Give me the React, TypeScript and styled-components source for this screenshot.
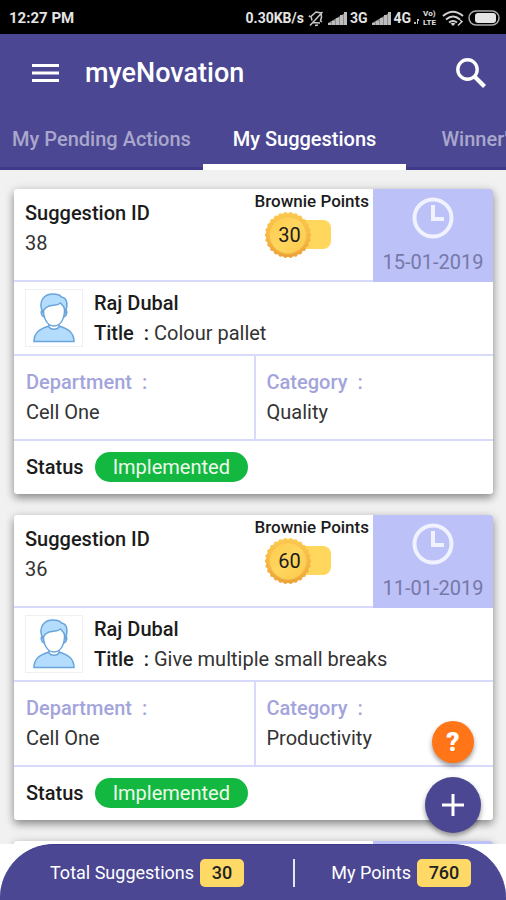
import React from "react";
import styled, { createGlobalStyle } from "styled-components";

const colors = {
  primary: "#4b4793",
  primaryDark: "#3f3a8a",
  line: "#d7dafa",
  lilac: "#a3a4dc",
  date: "#bcc1f7",
  yellow: "#ffd966",
};

const GlobalStyle = createGlobalStyle`
  * { box-sizing: border-box; }
  body { margin: 0; font-family: Roboto, "Liberation Sans", sans-serif; color: #1c1c1c; }
  button { font: inherit; border: 0; padding: 0; background: none; color: inherit; cursor: pointer; }
`;

const Screen = styled.div`
  position: relative;
  display: flex;
  flex-direction: column;
  height: 100vh;
  overflow: hidden;
  background: #fff;
`;

const StatusBar = styled.div`
  flex: none;
  display: flex;
  align-items: center;
  justify-content: space-between;
  height: 34px;
  padding: 2px 6px 0 9px;
  background: #000;
  color: #e4e4e4;
  font-size: 15px;
  font-weight: 700;
`;

const Indicators = styled.div`
  display: flex;
  align-items: center;
  gap: 4px;
  font-size: 14px;
`;

const Network = styled.span`
  display: flex;
  align-items: center;
  gap: 3px;
`;

const Volte = styled.span`
  display: flex;
  flex-direction: column;
  margin-right: 2px;
  font-size: 8px;
  line-height: 9px;
`;

const Header = styled.header`
  flex: none;
  background: ${colors.primary};
  color: #fff;
`;

const AppBar = styled.div`
  display: flex;
  align-items: center;
  height: 78px;
  padding: 0 19px 0 32px;
`;

const IconButton = styled.button`
  display: flex;
`;

const AppTitle = styled.h1`
  flex: 1;
  margin: 0 0 0 26px;
  font-size: 27px;
  font-weight: 500;
`;

const Tabs = styled.nav`
  display: flex;
  overflow: hidden;
`;

const Tab = styled.button<{ $active?: boolean }>`
  flex: 0 0 40.12%;
  height: 58px;
  padding-top: 2px;
  border-bottom: ${(p) => (p.$active ? "6px solid #fff" : `3px solid ${colors.primaryDark}`)};
  padding-bottom: ${(p) => (p.$active ? "0" : "3px")};
  color: ${(p) => (p.$active ? "#fff" : "#a9a7cb")};
  font-size: 20px;
  font-weight: 500;
  white-space: nowrap;
`;

const List = styled.main`
  flex: 1;
  min-height: 0;
  overflow: hidden;
  display: flex;
  flex-direction: column;
  gap: 21px;
  padding: 19px 13px 0 14px;
  background: #f1f1f1;
`;

const Card = styled.article`
  flex: none;
  border-radius: 3px;
  background: #fff;
  box-shadow: 0 4px 8px rgba(0, 0, 0, 0.4), 0 0 12px rgba(0, 0, 0, 0.08);
  font-size: 20px;
  line-height: 30px;
  overflow: hidden;
`;

const Summary = styled.div`
  display: flex;
  height: 93px;
  border-bottom: 2px solid ${colors.line};
`;

const IdBlock = styled.div`
  flex: 1;
  padding: 9px 0 0 11px;
`;

const Label = styled.div`
  font-weight: 500;
`;

const Value = styled.div`
  color: #333;
`;

const Points = styled.div`
  padding: 2px 4px 0 0;
`;

const PointsLabel = styled.div`
  font-size: 17px;
  line-height: 20px;
  font-weight: 500;
`;

const PointsBadge = styled.div`
  position: relative;
  display: flex;
  align-items: center;
  width: 68px;
  height: 48px;
  margin-left: 10px;
`;

const CoinArt = styled.svg`
  position: absolute;
  inset: 0;
`;

const PointsValue = styled.span`
  position: relative;
  width: 50px;
  text-align: center;
`;

const DateBlock = styled.div`
  flex: none;
  display: flex;
  flex-direction: column;
  align-items: center;
  gap: 8px;
  width: 120px;
  margin-bottom: -2px;
  padding-top: 8px;
  background: ${colors.date};
  color: #7678a8;
`;

const Person = styled.div`
  display: flex;
  height: 74px;
  padding: 6px 11px 0;
  border-bottom: 2px solid ${colors.line};
`;

const Avatar = styled.div`
  flex: none;
  display: flex;
  align-items: center;
  justify-content: center;
  width: 58px;
  height: 58px;
  margin: 1px 11px 0 0;
  border: 1px solid #f0f0f4;
`;

const Thin = styled.span`
  color: #333;
  font-weight: 400;
`;

const Details = styled.div`
  display: grid;
  grid-template-columns: 1fr 1fr;
  height: 85px;
  border-bottom: 2px solid ${colors.line};
`;

const Detail = styled.div`
  padding: 11px 12px 0;
  & + & {
    border-left: 2px solid ${colors.line};
    padding-left: 11px;
  }
`;

const DetailLabel = styled.div`
  color: ${colors.lilac};
  font-weight: 500;
  white-space: pre;
`;

const StatusRow = styled.div`
  display: flex;
  align-items: center;
  gap: 11px;
  height: 53px;
  padding: 0 0 2px 12px;
`;

const StatusPill = styled.span`
  padding: 0 18px;
  border-radius: 15px;
  background: #13b841;
  color: #eefbea;
`;

const Footer = styled.footer`
  flex: none;
  display: flex;
  align-items: center;
  justify-content: space-between;
  height: 56px;
  padding: 0 35px 0 50px;
  border-radius: 54px 54px 0 0;
  border-top: 1px solid ${colors.primaryDark};
  background: ${colors.primary};
  color: #fff;
  font-size: 18px;
`;

const Total = styled.div`
  display: flex;
  align-items: center;
  gap: 6px;
`;

const TotalValue = styled.span<{ $wide?: boolean }>`
  width: ${(p) => (p.$wide ? "54px" : "44px")};
  border-radius: 5px;
  background: ${colors.yellow};
  color: #222;
  font-weight: 500;
  line-height: 28px;
  text-align: center;
`;

const Divider = styled.span`
  width: 2px;
  height: 28px;
  margin-left: 13px;
  background: #e7e6f5;
`;

const Floating = styled.div`
  position: absolute;
  right: 25px;
  bottom: 67px;
  display: flex;
  flex-direction: column;
  align-items: center;
  gap: 14px;
`;

const RoundButton = styled.button<{ $large?: boolean }>`
  display: flex;
  align-items: center;
  justify-content: center;
  width: ${(p) => (p.$large ? 56 : 42)}px;
  height: ${(p) => (p.$large ? 56 : 42)}px;
  border-radius: 50%;
  background: ${(p) => (p.$large ? colors.primary : "#ff7517")};
  box-shadow: 0 3px 5px rgba(0, 0, 0, 0.4);
  color: #fff;
  font-size: 26px;
  font-weight: 900;
`;

const MuteIcon = () => (
  <svg width="16" height="17" viewBox="0 0 16 17" fill="none" stroke="#c8c8c8" strokeWidth="1.5">
    <path d="M4 10.500 3 6.500 8 2l5 1 .5 4-1 4 1.500 1M5 12.500l7 .5M7 15.500l3-.5M1 7l1-1.500M14.500 2 2 15.500" />
  </svg>
);

const SignalIcon = () => (
  <svg width="19" height="13" viewBox="0 0 19 13">
    <path d="M0 13v-2L19 0v13z" fill="#8c8c8c" />
    <path d="M0 11h3v2H0zM4 9h3v4H4zM8 6h3v7H8zM12 3h3v10h-3zM16 0h3v13h-3z" fill="#bdbdbd" />
  </svg>
);

const DataIcon = () => (
  <svg width="5" height="11" viewBox="0 0 5 11" fill="#bdbdbd">
    <path d="M0 9h2v2H0zM3 6h2v2H4v3H3z" />
  </svg>
);

const WifiIcon = () => (
  <svg width="22" height="17" viewBox="0 0 22 17" fill="none" stroke="#d0d0d0" strokeWidth="2">
    <path d="M1 6Q11-2.500 21 6M4 9.500q7-6 14 0M7 12.500q4-3 8 0" />
    <path d="m11 16-2.500-2.500q2.500-1.500 5 0z" fill="#d0d0d0" stroke="none" />
    <path d="m18 10 2 1.500-4 4" strokeWidth="1.500" />
  </svg>
);

const BatteryIcon = () => (
  <svg width="32" height="16" viewBox="0 0 32 16">
    <rect x="1" y="1" width="30" height="14" rx="7" fill="none" stroke="#aaa" strokeWidth="1.500" />
    <rect x="7" y="3" width="21" height="10" rx="3" fill="#e4e4e4" />
  </svg>
);

const MenuIcon = () => (
  <svg width="27" height="18" viewBox="0 0 27 18" fill="#fff">
    <path d="M0 0h27v3H0zM0 7.500h27v3H0zM0 15h27v3H0z" />
  </svg>
);

const SearchIcon = () => (
  <svg width="32" height="32" viewBox="0 0 32 32" fill="none" stroke="#fff">
    <circle cx="12.500" cy="12.500" r="9.700" strokeWidth="3.400" />
    <path d="m19.500 19.500 10 10" strokeWidth="4.200" />
  </svg>
);

const coinEdge = Array.from({ length: 192 }, (_, i) => {
  const angle = (i * Math.PI) / 96;
  const radius = 22.6 + 0.7 * Math.cos(angle * 26);
  return `${(24 + radius * Math.cos(angle)).toFixed(1)},${(24 + radius * Math.sin(angle)).toFixed(1)}`;
}).join(" ");

const Coin = () => (
  <CoinArt width="68" height="48" viewBox="0 0 68 48">
    <defs>
      <linearGradient id="coin-rim" x1="0" y1="0" x2="0" y2="1">
        <stop offset="0" stopColor="#fbcb50" />
        <stop offset="0.5" stopColor="#f6b944" />
        <stop offset="1" stopColor="#eca23a" />
      </linearGradient>
      <linearGradient id="coin-face" x1="0" y1="0" x2="1" y2="1">
        <stop offset="0" stopColor="#fdcb4c" />
        <stop offset="0.5" stopColor="#ffd65f" />
        <stop offset="1" stopColor="#fcc94a" />
      </linearGradient>
    </defs>
    <rect x="30" y="9" width="37" height="29" rx="8" fill="#ffd75c" />
    <polygon points={coinEdge} fill="url(#coin-rim)" />
    <circle cx="24" cy="24" r="18.500" fill="url(#coin-face)" stroke="#f8c24a" strokeWidth="1" />
  </CoinArt>
);

const ClockIcon = () => (
  <svg width="42" height="42" viewBox="0 0 42 42" fill="none" stroke="#f1f2ff">
    <circle cx="21" cy="21" r="18.500" strokeWidth="4" />
    <path d="M21 8v14h11" strokeWidth="4" />
  </svg>
);

const PersonIcon = () => (
  <svg width="42" height="50" viewBox="0 0 42 50" fill="#b4dcfd" stroke="#69a5dc" strokeWidth="1.500">
    <path d="M1 48.500C1 40 6 36 16 33c2 3 8 3 10 0 10 3 15 7 15 15.500z" />
    <path d="M16 30v4c2 3 8 3 10 0v-4" fill="#fff" />
    <path d="M10 17c-3 0-2 6 1 7M32 17c3 0 2 6-1 7" />
    <path d="M10.500 15C10 25 14 33 21 33s11-8 10.500-18L28 8.500 12 12z" fill="#fff" />
    <path d="M9.500 19C5 8 11 1 20 1c5 0 7 1 8.500 3 6 1 6.500 8 4 15l-1.500-5-3.500-4c-5 4.500-9 0-15 5z" />
  </svg>
);

interface Suggestion {
  id: string;
  points: string;
  date: string;
  name: string;
  title: string;
  department: string;
  category: string;
  status: string;
}

const suggestions: Suggestion[] = [
  { id: "38", points: "30", date: "15-01-2019", name: "Raj Dubal", title: "Colour pallet", department: "Cell One", category: "Quality", status: "Implemented" },
  { id: "36", points: "60", date: "11-01-2019", name: "Raj Dubal", title: "Give multiple small breaks", department: "Cell One", category: "Productivity", status: "Implemented" },
];

const SuggestionCard = ({ item }: { item: Suggestion }) => (
  <Card>
    <Summary>
      <IdBlock>
        <Label>Suggestion ID</Label>
        <Value>{item.id}</Value>
      </IdBlock>
      <Points>
        <PointsLabel>Brownie Points</PointsLabel>
        <PointsBadge>
          <Coin />
          <PointsValue>{item.points}</PointsValue>
        </PointsBadge>
      </Points>
      <DateBlock>
        <ClockIcon />
        <time>{item.date}</time>
      </DateBlock>
    </Summary>
    <Person>
      <Avatar>
        <PersonIcon />
      </Avatar>
      <div>
        <Label>{item.name}</Label>
        <Label>
          Title&nbsp; : <Thin>{item.title}</Thin>
        </Label>
      </div>
    </Person>
    <Details>
      <Detail>
        <DetailLabel>{"Department  :"}</DetailLabel>
        <Value>{item.department}</Value>
      </Detail>
      <Detail>
        <DetailLabel>{"Category  :"}</DetailLabel>
        <Value>{item.category}</Value>
      </Detail>
    </Details>
    <StatusRow>
      <Label>Status</Label>
      <StatusPill>{item.status}</StatusPill>
    </StatusRow>
  </Card>
);

export default function App() {
  return (
    <Screen>
      <GlobalStyle />
      <StatusBar>
        <span>12:27 PM</span>
        <Indicators>
          <span>0.30KB/s</span>
          <MuteIcon />
          <Network>
            <SignalIcon />
            3G
          </Network>
          <Network>
            <SignalIcon />
            4G
            <DataIcon />
          </Network>
          <Volte>
            <span>Vo)</span>
            <span>LTE</span>
          </Volte>
          <WifiIcon />
          <BatteryIcon />
        </Indicators>
      </StatusBar>
      <Header>
        <AppBar>
          <IconButton aria-label="Menu">
            <MenuIcon />
          </IconButton>
          <AppTitle>myeNovation</AppTitle>
          <IconButton aria-label="Search">
            <SearchIcon />
          </IconButton>
        </AppBar>
        <Tabs>
          <Tab>My Pending Actions</Tab>
          <Tab $active>My Suggestions</Tab>
          <Tab>Winner's Circle</Tab>
        </Tabs>
      </Header>
      <List>
        {suggestions.map((item) => (
          <SuggestionCard key={item.id} item={item} />
        ))}
        <Card>
          <Summary>
            <IdBlock />
            <DateBlock />
          </Summary>
        </Card>
      </List>
      <Footer>
        <Total>
          Total Suggestions <TotalValue>30</TotalValue>
        </Total>
        <Divider />
        <Total>
          My Points <TotalValue $wide>760</TotalValue>
        </Total>
      </Footer>
      <Floating>
        <RoundButton aria-label="Help">?</RoundButton>
        <RoundButton $large aria-label="Add suggestion">
          <svg width="22" height="22" viewBox="0 0 22 22" fill="#fff">
            <path d="M9.500 0h3v9.500H22v3h-9.500V22h-3v-9.500H0v-3h9.500z" />
          </svg>
        </RoundButton>
      </Floating>
    </Screen>
  );
}
